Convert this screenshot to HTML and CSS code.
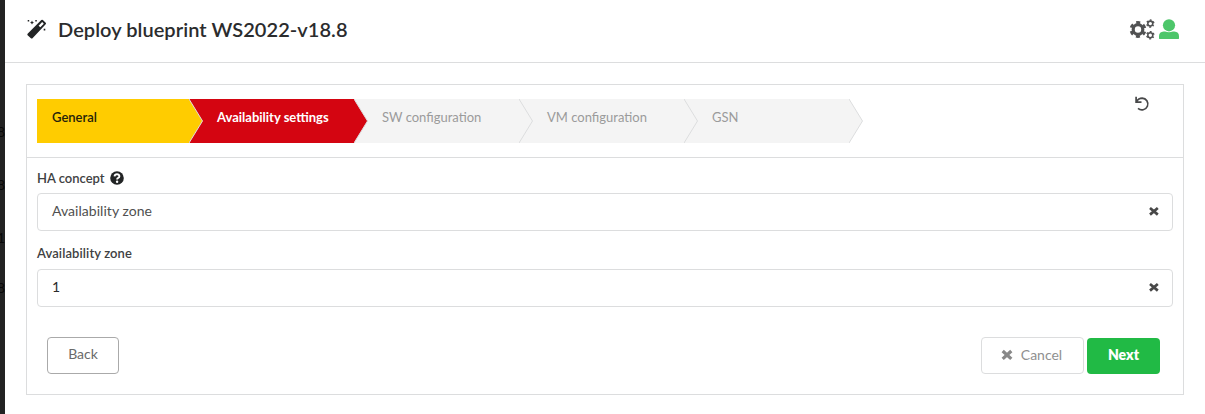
FILE: index.html
```html
<!DOCTYPE html>
<html lang="en">
<head>
<meta charset="utf-8">
<title>Deploy blueprint</title>
<link rel="stylesheet" href="styles.css">
</head>
<body>
<div class="app">
  <aside class="backdrop"><span>8</span><span>8</span><span class="one">1</span><span>8</span></aside>
  <main class="modal">
    <header class="header">
      <svg class="wand" width="22" height="22" viewBox="0 0 22 22" fill="#222425">
        <path fill-rule="evenodd" d="M1.600 15.800 15.300 2.100q.8-.8 1.600 0l2.800 2.600q.8.8 0 1.600L6.500 20.200q-.8.7-1.600 0l-3.300-2.900q-.6-.7 0-1.500zM16.200 4.100 12.600 7.700l1.700 1.600 3.500-3.600z"/>
        <path d="m6 2.600.7 1.300 1.300.6-1.300.7L6 6.500l-.7-1.300L4 4.500l1.300-.6zM1.700 2h1.500v1.500H1.700zM9.300 2h1.500v1.500H9.300zM17.700 10.800h1.600v1.600h-1.600z"/>
      </svg>
      <h1>Deploy blueprint WS2022-v18.8</h1>
      <div class="tools">
        <svg width="26" height="22" viewBox="0 0 26 22" fill="none" stroke="#505152">
          <circle cx="9" cy="11.500" r="4.800" stroke-width="3.200"/>
          <circle cx="9" cy="11.500" r="7.100" stroke-width="2.600" stroke-dasharray="3.900 3.535" stroke-dashoffset="1.950" transform="rotate(30 9 11.500)"/>
          <g id="cog"><circle cx="21.300" cy="5.600" r="2.500" stroke-width="1.600"/><circle cx="21.300" cy="5.600" r="3.600" stroke-width="1.300" stroke-dasharray="1.800 1.970" stroke-dashoffset=".9" transform="rotate(30 21.300 5.600)"/></g>
          <use href="#cog" y="11.600"/>
        </svg>
        <svg width="20" height="20" viewBox="0 0 20 20" fill="#4dc66a">
          <circle cx="10" cy="6.300" r="6.100"/><path d="M0 19.600V17.300q0-4.400 4.700-4.700h1.400q3.900 1.500 7.800 0h1.400Q20 12.900 20 17.300v2.300q0 .4-.6.4H.6q-.6 0-.6-.4z"/>
        </svg>
      </div>
    </header>
    <section class="panel">
      <div class="wizard">
        <ol class="steps">
          <li class="done">General<svg width="14" height="44" viewBox="0 0 14 44"><path d="M0 0 13.500 22 0 44z"/><path class="edge" d="M0 0 13.500 22 0 44"/></svg></li>
          <li class="active">Availability settings<svg width="14" height="44" viewBox="0 0 14 44"><path d="M0 0 13.500 22 0 44z"/><path class="edge" d="M0 0 13.500 22 0 44"/></svg></li>
          <li>SW configuration<svg width="14" height="44" viewBox="0 0 14 44"><path d="M0 0 13.500 22 0 44z"/><path class="edge" d="M0 0 13.500 22 0 44"/></svg></li>
          <li>VM configuration<svg width="14" height="44" viewBox="0 0 14 44"><path d="M0 0 13.500 22 0 44z"/><path class="edge" d="M0 0 13.500 22 0 44"/></svg></li>
          <li>GSN<svg width="14" height="44" viewBox="0 0 14 44"><path d="M0 0 13.500 22 0 44z"/><path class="edge" d="M0 0 13.500 22 0 44"/></svg></li>
        </ol>
        <svg class="undo" width="16" height="16" viewBox="0 0 16 16" fill="none" stroke="#48494a" stroke-width="1.700"><path d="M2.100 .8v5.300h5.400M2.400 5.700C4 3 5.800 2.100 8.200 2.100a5.900 5.900 0 1 1-4.200 10.300"/></svg>
      </div>
      <div class="form">
        <div class="label">HA concept
          <svg width="14" height="14" viewBox="0 0 14 14"><circle cx="7" cy="7" r="6.800" fill="#222425"/><path d="M4.500 5.400Q4.900 3.300 7 3.300t2.400 1.900Q9.400 6.300 8.200 6.900 7.100 7.400 7.100 8.600" fill="none" stroke="#fff" stroke-width="1.900"/><circle cx="7.100" cy="10.700" r="1.200" fill="#fff"/></svg>
        </div>
        <div class="input">Availability zone<svg width="10" height="10" viewBox="0 0 10 10"><path d="M1 2 8.800 8.600M8.800 2 1 8.600"/></svg></div>
        <div class="label second">Availability zone</div>
        <div class="input value">1<svg width="10" height="10" viewBox="0 0 10 10"><path d="M1 2 8.800 8.600M8.800 2 1 8.600"/></svg></div>
        <div class="actions">
          <button class="back">Back</button>
          <button class="cancel"><svg width="12" height="12" viewBox="0 0 12 12"><path d="M1.700 2 10.300 9.900M10.300 2 1.700 9.900"/></svg>Cancel</button>
          <button class="next">Next</button>
        </div>
      </div>
    </section>
  </main>
</div>
</body>
</html>
```
FILE: styles.css
```css
* { box-sizing: border-box; }
body { margin: 0; background: #fff; font: 14px/20px Lato, "Open Sans", sans-serif; color: #505050; overflow: hidden; }
.app { display: flex; height: 414px; }
.backdrop { width: 5px; background: #222; overflow: hidden; padding-top: 122px; display: flex; flex-direction: column; gap: 33px; color: #080808; line-height: 20px; }
.backdrop span { margin-left: -3px; }
.backdrop .one { margin-bottom: -3px; }
.modal { flex: 1; }
.header { height: 63px; border-bottom: 1px solid #dcddde; display: flex; align-items: flex-start; padding: 18px 26px 0 21px; }
.wand { margin-right: 10px; }
h1 { margin: -1px 0 0; font-size: 20px; line-height: 24px; font-weight: 600; letter-spacing: .05px; color: #2b2c2d; flex: 1; }
.tools { display: flex; gap: 4px; }
.tools svg:last-child { margin-top: 1px; }
.panel { margin: 21px 21px 0; height: 311px; border: 1px solid #dcddde; }
.wizard { height: 73px; border-bottom: 1px solid #dcddde; padding: 14px 33px 0 10px; display: flex; justify-content: space-between; }
.steps { list-style: none; display: flex; margin: 0; padding: 0; font-size: 13px; }
.steps li { position: relative; width: 165px; height: 44px; padding: 8px 0 0 28px; background: #f4f4f4; color: #9b9b9b; white-space: nowrap; }
.steps li:first-child { width: 152px; padding-left: 15px; }
.steps svg { position: absolute; z-index: 1; right: -14px; top: 0; fill: #f4f4f4; }
.steps .edge { fill: none; stroke: #dcddde; stroke-width: 1; }
.steps .done { background: #fc0; color: #25220b; font-weight: 600; }
.steps .done svg { fill: #fc0; }
.steps .active { background: #d40511; color: #fff; font-weight: 700; }
.steps .active svg { fill: #d40511; }
.undo { margin-top: -3px; }
.form { padding: 9px 10px 0; }
.label { display: flex; align-items: center; gap: 5px; height: 22px; font-size: 13px; font-weight: 600; color: #404142; margin-bottom: 4px; }
.second { margin-top: 11px; height: 22px; margin-bottom: 5px; letter-spacing: .1px; }
.input { display: flex; align-items: center; justify-content: space-between; height: 38px; border: 1px solid #dcddde; border-radius: 4px; padding: 0 13px 2px 14px; font-size: 14px; letter-spacing: .04px; }
.input svg { stroke: #484848; stroke-width: 2.7; }
.value { color: #2b2b2b; }
.actions { display: flex; align-items: flex-start; padding: 30px 13px 0 10px; }
button { height: 37px; border-radius: 4px; font: 14px/20px Lato, sans-serif; background: #fff; padding: 0 0 3px; color: #6a6a6a; }
.back { width: 72px; border: 1px solid #aaa; margin-right: auto; }
.cancel { width: 103px; border: 1px solid #dcddde; color: #909090; display: flex; align-items: center; justify-content: center; gap: 8px; padding: 0 2px 2px 0; }
.cancel svg { stroke: #888; stroke-width: 3.3; }
.next { width: 73px; height: 36px; border: 0; margin: 1px 0 0 3px; padding-bottom: 2px; color: #fff; background: #21ba45; font-weight: 800; }
```
